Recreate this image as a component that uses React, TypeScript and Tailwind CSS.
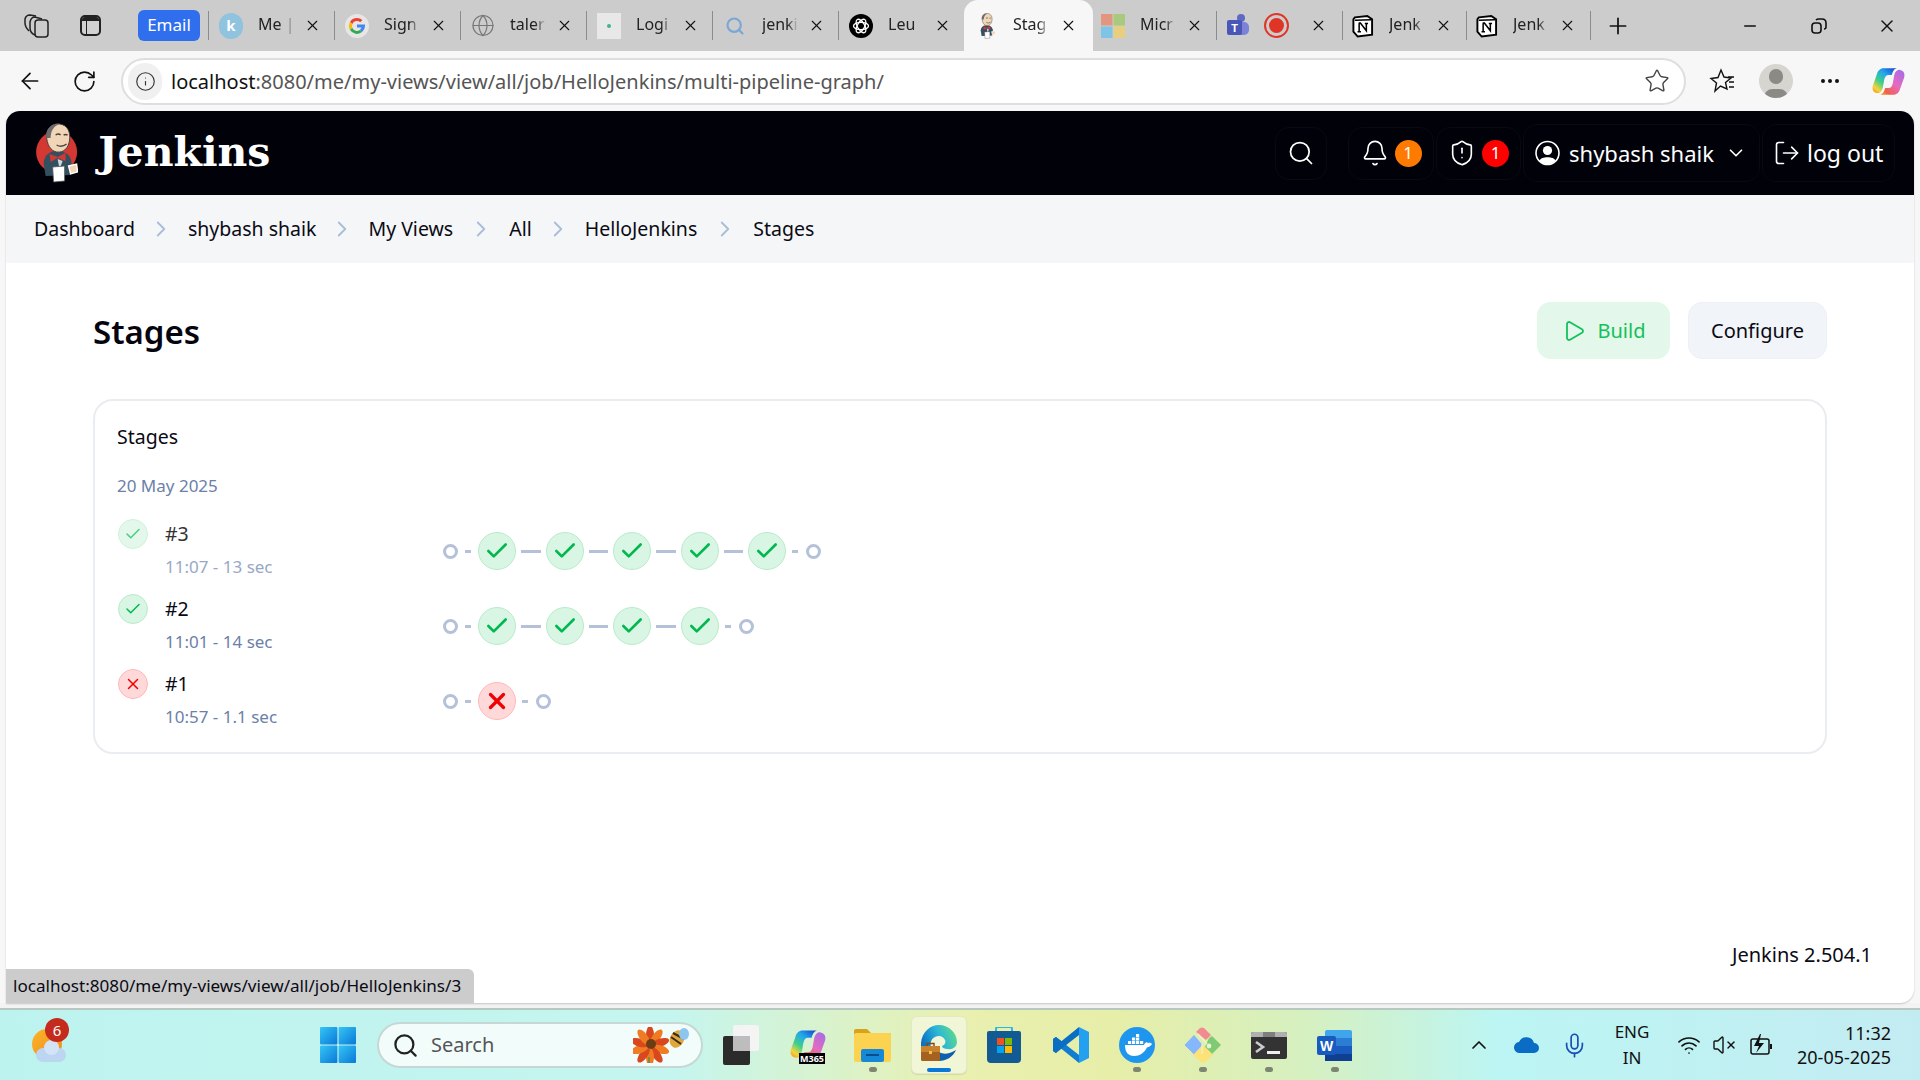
import React from "react";
import { Search, Bell, ShieldAlert, ChevronDown, LogOut, Play, Check, X, ChevronRight, ArrowLeft, RotateCw, Info, Star, Plus, Minus, Globe, MoreHorizontal, Mic, ChevronUp, Wifi, VolumeX } from "lucide-react";

const JenkinsLogo = ({ size = 60, red = true }: { size?: number; red?: boolean }) => (
  <svg width={size * 0.72} height={size} viewBox="0 0 42 60">
    {red && <ellipse cx="21" cy="29" rx="20.5" ry="21" fill="#d33833" />}
    <path d="M8 40 C9 31 15 28 21 28 C29 28 35 31 36 40 L35 52 L10 53 Z" fill="#335061" />
    <path d="M11 13 C11 4 18 0 24 1 C32 2 35 9 34 17 C33 25 28 30 21 29 C15 28 11 21 11 13 Z" fill="#f0d6b7" stroke="#49423d" strokeWidth="1" />
    <path d="M11 15 C9 7 16 0 24 1 C18 3 15 8 15 15 Z" fill="#6d6b6d" />
    <path d="M20 12 q3-2 5 0 M28 12 q2-1 4 0 M21 22 q5 3 10-1" stroke="#49423d" strokeWidth="1.4" fill="none" />
    <path d="M14 31 L22 34 L30 30 L30 38 L22 35 L15 39 Z" fill="#d33833" />
    <path d="M22 36 L27 38 L24 46 Z" fill="#cfd8dc" />
    <path d="M17 44 L29 43 L29 58 L18 59 Z" fill="#fff" stroke="#555" strokeWidth="0.8" />
    <path d="M33 43 L41 41 L42 49 L35 51 Z" fill="#f0d6b7" stroke="#fff" strokeWidth="1.4" />
  </svg>
);

const NotionIcon = () => (
  <svg width="23" height="24" viewBox="0 0 24 24">
    <path d="M4 3 L17 1.5 L22 5 V21 L7 23 L2.5 18 V5 Z" fill="#fff" stroke="#000" strokeWidth="2" />
    <path d="M4 6 L21 5.5" stroke="#000" strokeWidth="1.5" />
    <path d="M8 9 L9.8 9 L16 17 V9.5 M8.5 9 V18 M6.8 18 H10.4 M14.4 9.3 H17.8" stroke="#000" strokeWidth="1.6" fill="none" />
  </svg>
);

const GoogleIcon = () => (
  <svg width="24" height="24" viewBox="0 0 24 24">
    <circle cx="12" cy="12" r="12" fill="#e6e6e6" />
    <path d="M12 4 a8 8 0 0 1 5.4 2.1 l-2.2 2.2 a4.8 4.8 0 0 0-7.8 1.8 L4.9 8.2 A8 8 0 0 1 12 4z" fill="#ea4335" />
    <path d="M4.9 8.2 l2.5 1.9 a5 5 0 0 0 0 3.8 l-2.5 1.9 a8 8 0 0 1 0-7.6z" fill="#fbbc05" />
    <path d="M4.9 15.8 l2.5-1.9 a4.8 4.8 0 0 0 7.4 2 l2.5 1.9 A8 8 0 0 1 4.9 15.8z" fill="#34a853" />
    <path d="M20 10.5 v1.5 a8 8 0 0 1-2.7 5.8 l-2.5-1.9 a4 4 0 0 0 1.7-2.4 H12 v-3z" fill="#4285f4" />
  </svg>
);

const OpenAIIcon = () => (
  <svg width="24" height="24" viewBox="0 0 24 24">
    <circle cx="12" cy="12" r="12" fill="#000" />
    <g fill="none" stroke="#fff" strokeWidth="1.3">
      <ellipse cx="12" cy="12" rx="7.5" ry="3.6" />
      <ellipse cx="12" cy="12" rx="7.5" ry="3.6" transform="rotate(60 12 12)" />
      <ellipse cx="12" cy="12" rx="7.5" ry="3.6" transform="rotate(120 12 12)" />
    </g>
  </svg>
);

const TileMS = () => (
  <svg width="24" height="24" viewBox="0 0 24 24">
    <rect x="0" y="0" width="11.5" height="11.5" fill="#e2957f" />
    <rect x="12.5" y="0" width="11.5" height="11.5" fill="#a9c97c" />
    <rect x="0" y="12.5" width="11.5" height="11.5" fill="#7fc4e6" />
    <rect x="12.5" y="12.5" width="11.5" height="11.5" fill="#e8cf80" />
  </svg>
);

const tabIcons: Record<string, React.ReactNode> = {
  k: <div className="flex h-[26px] w-[24px] items-center justify-center rounded-full bg-[#8fc3de] text-[15px] font-bold text-white">k</div>,
  g: <GoogleIcon />,
  globe: <Globe size={25} strokeWidth={1.2} color="#777" />,
  login: (
    <div className="flex h-[26px] w-[24px] items-center justify-center bg-[#e8e8e8]">
      <div className="h-[4px] w-[4px] rounded-full bg-[#3fb58b]" />
    </div>
  ),
  search: <Search size={20} strokeWidth={2.6} color="#7ba7d4" />,
  openai: <OpenAIIcon />,
  jenkins: <JenkinsLogo size={26} red={false} />,
  notion: <NotionIcon />,
};

const titleCls = "-mt-[3px] w-[36px] overflow-hidden text-[16px] whitespace-nowrap text-[#222] [mask-image:linear-gradient(90deg,#000_70%,transparent)]";

const Tab = ({ icon, title, active, narrow }: { icon: string; title: string; active?: boolean; narrow?: boolean }) => (
  <div
    className={
      active
        ? "flex h-[51px] w-[129px] shrink-0 items-center rounded-t-[14px] bg-[#f7f7f7] pl-[10px]"
        : narrow
          ? "flex h-[29px] w-[124px] shrink-0 items-center border-l border-[#8c8c8c] pl-[7px]"
          : "flex h-[29px] w-[126px] shrink-0 items-center border-l border-[#8c8c8c] pl-[10px]"
    }
  >
    <div className="flex w-[24px] shrink-0 items-center justify-center">{tabIcons[icon]}</div>
    <div className={"ml-[15px] " + titleCls}>{title}</div>
    <X size={17} strokeWidth={1.6} color="#111" className={active ? "ml-[11px] shrink-0" : "ml-[10px] shrink-0"} />
  </div>
);

const Edge = () => (
  <svg width="36" height="36" viewBox="0 0 36 36">
    <defs>
      <linearGradient id="eg" x1="0" y1="0.6" x2="1" y2="0.3">
        <stop offset="0" stopColor="#0c6fc4" />
        <stop offset="0.5" stopColor="#2bb6d8" />
        <stop offset="1" stopColor="#5fdc8a" />
      </linearGradient>
    </defs>
    <path d="M0 18 C1 7 9 0 18 0 C28 0 36 8 36 17 C36 22 31 25 27 24 C24 24 21 23 21 21 C24 20 25 17 24 15 C22 11 18 10 14 12 C10 14 9 18 10 22 L0 24 Z" fill="url(#eg)" />
    <path d="M14 24 C19 30 27 30 35 25 C32 32 25 36 18 36 L14 36 Z" fill="#0e5fae" />
    <rect x="0" y="21" width="19" height="15" rx="1.5" fill="#a5611f" />
    <rect x="0" y="21" width="19" height="6" fill="#c9822e" />
    <rect x="8" y="26" width="3" height="3" fill="#f3c14d" />
    <path d="M6 21 v-2.5 h7 v2.5" fill="none" stroke="#7d4716" strokeWidth="1.4" />
  </svg>
);

const Copilot = ({ size = 33, id }: { size?: number; id: string }) => (
  <svg width={size} height={size} viewBox="0 0 40 40">
    <defs>
      <linearGradient id={id + "a"} x1="0.85" y1="0" x2="0.1" y2="1">
        <stop offset="0" stopColor="#1b4fd0" />
        <stop offset="0.3" stopColor="#22a6ee" />
        <stop offset="0.6" stopColor="#3fcf8a" />
        <stop offset="0.85" stopColor="#f5d53a" />
        <stop offset="1" stopColor="#f59a2a" />
      </linearGradient>
      <linearGradient id={id + "b"} x1="0.9" y1="0" x2="0.1" y2="1">
        <stop offset="0" stopColor="#a86be8" />
        <stop offset="0.5" stopColor="#e56bc0" />
        <stop offset="0.85" stopColor="#f0604a" />
        <stop offset="1" stopColor="#f5902a" />
      </linearGradient>
    </defs>
    <path d="M14 4 H30 C26 5 25 9 24 12 H20 C17 12 16 14 15 17 L13 28 C12 32 9 35 6 34 C1 33 0 29 1 25 L6 11 C7 7 10 4 14 4 Z" fill={`url(#${id}a)`} />
    <path d="M26 36 H10 C14 35 15 31 16 28 H20 C23 28 24 26 25 23 L27 12 C28 8 31 5 34 6 C39 7 40 11 39 15 L34 29 C33 33 30 36 26 36 Z" fill={`url(#${id}b)`} />
  </svg>
);

const WinLogo = () => (
  <svg width="36" height="36" viewBox="0 0 36 36">
    <defs>
      <linearGradient id="w" x1="0" y1="0" x2="1" y2="1">
        <stop offset="0" stopColor="#35c5f5" />
        <stop offset="1" stopColor="#0a78d8" />
      </linearGradient>
    </defs>
    <rect x="0" y="0" width="17.4" height="17.4" fill="url(#w)" rx="1" />
    <rect x="18.6" y="0" width="17.4" height="17.4" fill="url(#w)" rx="1" />
    <rect x="0" y="18.6" width="17.4" height="17.4" fill="url(#w)" rx="1" />
    <rect x="18.6" y="18.6" width="17.4" height="17.4" fill="url(#w)" rx="1" />
  </svg>
);

const Bees = () => (
  <svg width="56" height="36" viewBox="0 0 56 36">
    <g>
      {[0, 36, 72, 108, 144, 180, 216, 252, 288, 324].map((a) => (
        <ellipse key={a} cx="17" cy="8" rx="4" ry="9" fill={a % 72 === 0 ? "#d9471e" : "#ef7b22"} transform={`rotate(${a} 17 19)`} />
      ))}
      <circle cx="18" cy="17" r="5" fill="#6b3d14" />
      <path d="M16 30 v6" stroke="#5f8f3a" strokeWidth="1.5" />
    </g>
    <ellipse cx="44" cy="12" rx="7" ry="9" fill="#e0a63a" transform="rotate(25 44 12)" />
    <path d="M38 10 L48 17 M40 6 L51 12" stroke="#3a2a18" strokeWidth="2" />
    <ellipse cx="51" cy="7" rx="5" ry="6" fill="#8cc6ee" />
  </svg>
);

const TaskView = () => (
  <svg width="36" height="40" viewBox="0 0 36 40">
    <rect x="10" y="0" width="26" height="26" rx="2" fill="#f4f4f4" />
    <rect x="0" y="11" width="27" height="29" rx="2" fill="#2b2b2b" />
    <rect x="10" y="11" width="17" height="15" fill="#bdbdbd" />
  </svg>
);

const M365 = () => (
  <div className="relative h-[36px] w-[36px]">
    <Copilot size={36} id="m" />
    <div className="absolute -bottom-[1px] left-[9px] bg-black px-[1px] text-[9px] leading-[11px] font-bold text-white">M365</div>
  </div>
);

const Files = () => (
  <svg width="37" height="33" viewBox="0 0 37 33">
    <path d="M0 2 a2 2 0 0 1 2-2 h11 l4 4 h18 a2 2 0 0 1 2 2 v4 H0 Z" fill="#d9a21b" />
    <rect x="0" y="4" width="37" height="29" rx="2" fill="#fcd351" />
    <rect x="7" y="20" width="23" height="13" rx="2" fill="#1688d8" />
    <rect x="12" y="25" width="13" height="2" fill="#084f8a" />
  </svg>
);

const Store = () => (
  <svg width="34" height="36" viewBox="0 0 34 36">
    <path d="M9 5 V2 a2 2 0 0 1 2-2 h12 a2 2 0 0 1 2 2 v3" fill="none" stroke="#2bb6e8" strokeWidth="2" />
    <path d="M0 6 a2 2 0 0 1 2-2 h30 a2 2 0 0 1 2 2 v26 a4 4 0 0 1-4 4 H4 a4 4 0 0 1-4-4 Z" fill="#125a93" />
    <rect x="10" y="11" width="7" height="7" fill="#f25022" />
    <rect x="18" y="11" width="7" height="7" fill="#7fba00" />
    <rect x="10" y="19" width="7" height="7" fill="#00a4ef" />
    <rect x="18" y="19" width="7" height="7" fill="#ffb900" />
  </svg>
);

const VSCode = () => (
  <svg width="36" height="36" viewBox="0 0 36 36">
    <path d="M0 12 L3 10 L26 28 V36 L0 15 Z" fill="#0f7ed0" />
    <path d="M0 24 L3 26 L26 8 V0 L0 21 Z" fill="#0a6fc2" />
    <path d="M0 12 L3 10 L11 16 L7 20 L3 26 L0 24 Z" fill="#0a6fc2" />
    <path d="M26 0 L36 5 V31 L26 36 Z" fill="#23a0f0" />
  </svg>
);

const Docker = () => (
  <svg width="36" height="36" viewBox="0 0 36 36">
    <circle cx="18" cy="18" r="18" fill="#1f96ee" />
    <path d="M6 18 H25 C26 15 28 14.5 29 16 C31 15.5 32 16 33 17 C31 20 29 20 28 20.5 C25 26 21 29 15 29 C9 29 6 25 6 18 Z" fill="#fff" />
    <g fill="#fff">
      <rect x="9" y="14" width="3.2" height="3" />
      <rect x="13" y="14" width="3.2" height="3" />
      <rect x="17" y="14" width="3.2" height="3" />
      <rect x="21" y="14" width="3.2" height="3" />
      <rect x="13" y="10.5" width="3.2" height="3" />
      <rect x="17" y="10.5" width="3.2" height="3" />
      <rect x="17" y="7" width="3.2" height="3" />
    </g>
  </svg>
);

const GitIcon = () => (
  <svg width="36" height="36" viewBox="0 0 36 36">
    <path d="M0 18 L9 8.5 L17 18 L9 27 Z" fill="#86b6fc" stroke="#86b6fc" strokeLinejoin="round" />
    <path d="M11 5 L15 1 Q17 0 19 1 L26 8 L21 13 Z" fill="#f28b90" />
    <path d="M24 11 L27 9 L36 18 L27 27 L20 20 Z" fill="#7fca72" />
    <path d="M8 28 L17 19 L19 19 L28 28 L19 36 Q18 36 17 36 Z" fill="#fde27a" />
    <circle cx="24" cy="19" r="2.4" fill="#e8f3d0" />
    <path d="M13 7 L22 17 M17 17 L17 27" stroke="#eef2c8" strokeWidth="1.3" />
  </svg>
);

const Terminal = () => (
  <svg width="36" height="27" viewBox="0 0 36 27">
    <rect width="36" height="27" rx="2" fill="#333" />
    <path d="M2 0 H34 a2 2 0 0 1 2 2 V5 H0 V2 a2 2 0 0 1 2-2 Z" fill="#b0b0b0" />
    <rect x="12" width="12" height="5" fill="#7f7f7f" />
    <path d="M5 10 L12 15 L5 20" fill="none" stroke="#ccc" strokeWidth="2.6" />
    <rect x="16" y="19" width="13" height="3" fill="#eee" />
  </svg>
);

const Word = () => (
  <svg width="35" height="31" viewBox="0 0 35 31">
    <rect x="8" y="0" width="27" height="31" rx="2" fill="#41a5ee" />
    <rect x="8" y="8" width="27" height="8" fill="#2b7cd3" />
    <rect x="8" y="16" width="27" height="8" fill="#185abd" />
    <rect x="8" y="24" width="27" height="7" fill="#103f91" />
    <rect x="0" y="6" width="19" height="19" rx="2" fill="#185abd" />
    <text x="9.5" y="21" textAnchor="middle" fontSize="14" fontWeight="700" fill="#fff" fontFamily="Liberation Sans">W</text>
  </svg>
);

const Weather = () => (
  <div className="relative -mt-[10px] h-[44px] w-[36px]">
    <div className="absolute top-[11px] left-0 h-[30px] w-[30px] rounded-full bg-[linear-gradient(135deg,#fbb52a,#f08a1d)]" />
    <div className="absolute bottom-0 left-[4px] h-[14px] w-[30px] rounded-[8px] bg-[#bcd6f2]" />
    <div className="absolute bottom-[7px] left-[12px] h-[15px] w-[15px] rounded-full bg-[#d3e4f8]" />
    <div className="absolute top-0 left-[13px] flex h-[24px] w-[24px] items-center justify-center rounded-full bg-[#c42b1c] text-[15px] text-white">6</div>
  </div>
);

const StageDot = () => <div className="h-[15px] w-[15px] shrink-0 rounded-full border-[3px] border-[#b4c1d9]" />;
const LeadDash = () => <div className="mx-[7px] h-[3px] w-[6px] shrink-0 bg-[#b4c1d9]" />;
const TailDash = () => <div className="mr-[8px] ml-[6px] h-[3px] w-[6px] shrink-0 bg-[#b4c1d9]" />;
const LongDash = () => <div className="mx-[5px] h-[3px] w-[19.5px] shrink-0 bg-[#b4c1d9]" />;
const StageOk = () => (
  <div className="flex h-[38px] w-[38px] shrink-0 items-center justify-center rounded-full border border-[#b8ecca] bg-[#d9f5e3]">
    <Check size={26} strokeWidth={2.4} color="#00b84f" />
  </div>
);
const StageFail = () => (
  <div className="flex h-[38px] w-[38px] shrink-0 items-center justify-center rounded-full border border-[#ffb8b8] bg-[#ffd9d9]">
    <X size={26} strokeWidth={3} color="#f00000" />
  </div>
);

const Row = ({ id, sub, ok, n, faded }: { id: string; sub: string; ok: boolean; n: number; faded?: boolean }) => (
  <div className="flex h-[75px]">
    <div className="flex w-[326px] shrink-0 pl-[1px]">
      <div
        className={
          (ok ? "border-[#b8ecca] bg-[#d9f5e3] " : "border-[#ffb8b8] bg-[#ffd9d9] ") +
          (faded ? "opacity-70 " : "") +
          "flex h-[30px] w-[30px] shrink-0 items-center justify-center rounded-full border"
        }
      >
        {ok ? <Check size={18} strokeWidth={2} color="#00b84f" /> : <X size={18} strokeWidth={2} color="#f00000" />}
      </div>
      <div className="ml-[17px]">
        <div className={(faded ? "text-[#333] " : "text-[#0a0a14] ") + "h-[30px] text-[19.5px] leading-[30px]"}>{id}</div>
        <div className={(faded ? "text-[#98a8c6] " : "text-[#6c80a8] ") + "mt-[6px] text-[17px] leading-[24px] whitespace-nowrap"}>{sub}</div>
      </div>
    </div>
    <div className="flex h-[64px] items-center">
      <StageDot />
      <LeadDash />
      {ok ? (
        Array.from({ length: n }).map((_, i) => (
          <React.Fragment key={i}>
            {i > 0 && <LongDash />}
            <StageOk />
          </React.Fragment>
        ))
      ) : (
        <StageFail />
      )}
      <TailDash />
      <StageDot />
    </div>
  </div>
);

const Crumbs = [
  { t: "Dashboard", gap: "" },
  { t: "shybash shaik", gap: "w-[53px]" },
  { t: "My Views", gap: "w-[52px]" },
  { t: "All", gap: "w-[56px]" },
  { t: "HelloJenkins", gap: "w-[53px]" },
  { t: "Stages", gap: "w-[56px]" },
];

const TaskIcon = ({ ml, children, dot }: { ml: string; children: React.ReactNode; dot?: boolean }) => (
  <div className={ml + " relative flex h-[70px] shrink-0 items-center"}>
    {children}
    {dot && <div className="absolute bottom-[8px] left-1/2 h-[5px] w-[8px] -translate-x-1/2 rounded-full bg-[#7d8670]" />}
  </div>
);

export default function App() {
  return (
    <div className="flex h-[1080px] w-[1920px] flex-col overflow-hidden bg-[#f7f7f7] font-['Noto_Sans',sans-serif]">
      {/* tab strip */}
      <div className="flex h-[51px] shrink-0 items-center bg-[#cccccc]">
        <svg width="25" height="24" viewBox="0 0 25 24" className="ml-[24px]" fill="none" stroke="#222" strokeWidth="1.5">
          <rect x="11" y="6" width="13" height="17" rx="3" />
          <path d="M11 21 Q6 19 6 14 V8 Q7 3 11 3 L18 5" />
          <path d="M5 17 Q1 13 1 9 V5 Q2 1 6 1 L12 2" />
        </svg>
        <div className="ml-[31px] flex h-[21px] w-[21px] flex-col overflow-hidden rounded-[5px] border-2 border-[#222] bg-[#d2d2d2]">
          <div className="h-[4px] shrink-0 bg-[#222]" />
          <div className="ml-[4px] flex-1 border-l-[1.5px] border-[#222]" />
        </div>
        <div className="ml-[37px] flex h-[31px] w-[62px] items-center justify-center rounded-[6px] bg-[#2f6fed] pb-[2px] text-[17px] text-white">Email</div>
        <div className="ml-[8px] flex items-center">
          <Tab icon="k" title="Me |" />
          <Tab icon="g" title="Sign" />
          <Tab icon="globe" title="taler" />
          <Tab icon="login" title="Logi" />
          <Tab icon="search" title="jenki" />
          <Tab icon="openai" title="Leu" />
          <Tab icon="jenkins" title="Stag" active />
          <div className="flex h-[29px] w-[123px] shrink-0 items-center pl-[8px]">
            <TileMS />
            <div className={"ml-[15px] " + titleCls}>Micr</div>
            <X size={17} strokeWidth={1.6} color="#111" className="ml-[10px] shrink-0" />
          </div>
          <div className="flex h-[29px] w-[126px] shrink-0 items-center border-l border-[#8c8c8c] pl-[9px]">
            <svg width="24" height="26" viewBox="0 0 24 26">
              <circle cx="15" cy="5" r="4" fill="#5d6ac4" />
              <rect x="10" y="9" width="13" height="13" rx="5" fill="#7b83d9" />
              <rect x="1" y="7" width="15" height="15" rx="2" fill="#4a56b8" />
              <text x="8.5" y="19" textAnchor="middle" fontSize="11" fontWeight="700" fill="#fff" fontFamily="Liberation Sans">T</text>
            </svg>
            <div className="ml-[14px] flex h-[25px] w-[25px] items-center justify-center rounded-full border-2 border-[#e03426]">
              <div className="h-[15px] w-[15px] rounded-full bg-[#e03426]" />
            </div>
            <X size={17} strokeWidth={1.6} color="#111" className="ml-[21px] shrink-0" />
          </div>
          <Tab icon="notion" title="Jenk" narrow />
          <Tab icon="notion" title="Jenk" narrow />
          <div className="h-[29px] border-l border-[#8c8c8c]" />
        </div>
        <Plus size={26} strokeWidth={1.6} color="#111" className="ml-[14px]" />
        <Minus size={18} strokeWidth={2} color="#111" className="ml-[110px]" />
        <svg width="16" height="16" viewBox="0 0 16 16" className="ml-[52px]" fill="none" stroke="#111" strokeWidth="1.6">
          <rect x="1" y="5" width="9" height="10" rx="3" />
          <path d="M5 2 Q6 1 8 1 h3 q4 0 4 4 v4 q0 2-2 2" />
        </svg>
        <X size={20} strokeWidth={1.7} color="#111" className="ml-[50px]" />
      </div>

      {/* address row */}
      <div className="flex h-[60px] shrink-0 items-center bg-[#f7f7f7]">
        <ArrowLeft size={26} strokeWidth={1.6} color="#111" className="ml-[17px]" />
        <RotateCw size={25} strokeWidth={1.6} color="#111" className="ml-[29px]" />
        <div className="ml-[24px] flex h-[47px] w-[1565px] shrink-0 items-center rounded-full border-2 border-[#dedede] bg-white pl-[5px]">
          <div className="flex h-[37px] w-[34px] items-center justify-center rounded-full bg-[#f0f0f0]">
            <Info size={21} strokeWidth={1.3} color="#333" />
          </div>
          <div className="mt-[1px] ml-[9px] text-[20px] whitespace-nowrap text-[#555]">
            <span className="text-[#111]">localhost</span>:8080/me/my-views/view/all/job/HelloJenkins/multi-pipeline-graph/
          </div>
          <Star size={26} strokeWidth={1.3} color="#444" className="mr-[14px] ml-auto" />
        </div>
        <svg width="26" height="26" viewBox="0 0 26 26" className="ml-[23px]" fill="none" stroke="#111" strokeWidth="1.4">
          <path d="M12 2 L15 9 L22 10 L16.5 14.5 L18 21 L11.5 18 L6 23 L7.5 15 L2 10.5 L9 9.5 Z" />
          <path d="M19 9 h6 M20 14 h5 M20 19 h5" />
        </svg>
        <div className="relative ml-[24px] h-[34px] w-[34px] overflow-hidden rounded-full bg-[#d6d5d0]">
          <div className="absolute top-[5px] left-[10px] h-[15px] w-[14px] rounded-full bg-[#8c8a85]" />
          <div className="absolute -bottom-[8px] left-[5px] h-[17px] w-[24px] rounded-full bg-[#8c8a85]" />
        </div>
        <MoreHorizontal size={24} strokeWidth={2} color="#111" className="ml-[25px]" />
        <div className="ml-[30px]">
          <Copilot size={33} id="c" />
        </div>
      </div>

      {/* page */}
      <div className="flex h-[892px] shrink-0 flex-col px-[6px]">
        <div className="relative flex h-full flex-col overflow-hidden rounded-t-[14px] rounded-br-[14px] bg-white shadow-[0_1px_2px_#00000030]">
          <header className="flex h-[84px] shrink-0 items-center bg-[#01010a] pl-[29px] text-white">
            <JenkinsLogo size={60} />
            <div className="ml-[20px] font-['DejaVu_Serif',serif] text-[41px] font-bold">Jenkins</div>
            <div className="mr-[19px] ml-auto flex items-center gap-[2px]">
              <div className="mr-[19px] flex h-[53px] w-[52px] items-center justify-center rounded-[14px] border border-[#090912]">
                <Search size={28} strokeWidth={1.5} />
              </div>
              <div className="flex h-[53px] w-[86px] items-center justify-center gap-[6px] rounded-[14px] border border-[#090912]">
                <Bell size={28} strokeWidth={1.4} />
                <div className="flex h-[27px] w-[27px] items-center justify-center rounded-full bg-[#ff7a00] text-[17px]">1</div>
              </div>
              <div className="flex h-[53px] w-[85px] items-center justify-center gap-[6px] rounded-[14px] border border-[#090912]">
                <ShieldAlert size={28} strokeWidth={1.4} />
                <div className="flex h-[27px] w-[27px] items-center justify-center rounded-full bg-[#ff0000] text-[17px]">1</div>
              </div>
              <div className="flex h-[58px] w-[237px] items-center rounded-[14px] border border-[#090912] pl-[11px]">
                <svg width="25" height="28" viewBox="0 0 25 25" fill="none">
                  <circle cx="12.5" cy="12.5" r="11.5" stroke="#fff" strokeWidth="1.6" />
                  <circle cx="12.5" cy="10" r="4.6" fill="#fff" />
                  <path d="M4.5 20 C6 15.5 19 15.5 20.5 20 C16 25 9 25 4.5 20 Z" fill="#fff" />
                </svg>
                <span className="mt-[1px] ml-[9px] text-[22px] whitespace-nowrap">shybash shaik</span>
                <ChevronDown size={22} strokeWidth={1.8} className="ml-[11px]" />
              </div>
              <div className="flex h-[58px] w-[133px] items-center rounded-[14px] border border-[#090912] pl-[10px]">
                <LogOut size={28} strokeWidth={1.4} />
                <span className="mt-[1px] ml-[6px] text-[23px] whitespace-nowrap">log out</span>
              </div>
            </div>
          </header>

          <nav className="flex h-[68px] shrink-0 items-center bg-[#f5f6f8] pl-[28px] text-[19.5px] text-[#0a0a14]">
            {Crumbs.map((c) => (
              <React.Fragment key={c.t}>
                {c.gap && (
                  <div className={c.gap + " flex justify-center"}>
                    <ChevronRight size={26} strokeWidth={1.7} color="#a9bdd9" />
                  </div>
                )}
                <span>{c.t}</span>
              </React.Fragment>
            ))}
          </nav>

          <main className="flex flex-1 flex-col px-[87px]">
            <div className="flex h-[136px] shrink-0 items-start pt-[39px]">
              <h1 className="mt-[8px] text-[33px] leading-[44px] font-semibold text-[#050510]">Stages</h1>
              <div className="ml-auto flex gap-[18px]">
                <div className="flex h-[57px] w-[133px] items-center justify-center gap-[12px] rounded-[14px] bg-[#e3f7ea] pt-[1px] text-[20px] text-[#13c15b]">
                  <Play size={24} strokeWidth={1.8} />
                  Build
                </div>
                <div className="flex h-[57px] w-[139px] items-center justify-center rounded-[14px] border border-[#edf0f4] bg-[#f1f4f8] pt-[1px] text-[20px] text-[#0a0a14]">
                  Configure
                </div>
              </div>
            </div>
            <section className="h-[355px] shrink-0 rounded-[20px] border-2 border-[#e9edf2] pr-[21px] pl-[22px]">
              <div className="mt-[21px] h-[30px] text-[19.5px] leading-[30px] text-[#0a0a14]">Stages</div>
              <div className="mt-[19px] h-[30px] text-[17px] leading-[30px] text-[#6c80a8]">20 May 2025</div>
              <div className="mt-[18px]">
                <Row id="#3" sub="11:07 - 13 sec" ok n={5} faded />
                <Row id="#2" sub="11:01 - 14 sec" ok n={4} />
                <Row id="#1" sub="10:57 - 1.1 sec" ok={false} n={1} />
              </div>
            </section>
            <div className="mt-auto mr-[-45px] mb-[33px] self-end text-[20px] text-[#0a0a14]">Jenkins 2.504.1</div>
          </main>

          <div className="absolute bottom-0 left-0 flex h-[34px] w-[468px] items-center rounded-tr-[6px] bg-[#cccccc] pl-[7px] text-[17.1px] whitespace-nowrap text-[#0a0a14]">
            localhost:8080/me/my-views/view/all/job/HelloJenkins/3
          </div>
        </div>
      </div>
      <div className="h-[5px] shrink-0 bg-[#f3f3f3]" />

      {/* taskbar */}
      <div className="flex h-[72px] shrink-0 items-center border-t-2 border-[#b6c8c0] bg-[linear-gradient(90deg,#bdf3ef_0%,#c5f5ef_35%,#e9f0b0_50%,#e6eea8_58%,#d6f0c0_68%,#bcf5f3_78%,#c3ecf2_100%)]">
        <TaskIcon ml="ml-[32px]">
          <Weather />
        </TaskIcon>
        <TaskIcon ml="ml-[252px]">
          <WinLogo />
        </TaskIcon>
        <div className="ml-[21px] flex h-[46px] w-[326px] items-center rounded-full border-2 border-[#c5d8d4] bg-[#f2fdfb] pl-[13px]">
          <Search size={27} strokeWidth={2} color="#222" />
          <span className="ml-[12px] text-[20px] text-[#555]">Search</span>
          <div className="mr-[12px] ml-auto">
            <Bees />
          </div>
        </div>
        <TaskIcon ml="ml-[20px]">
          <TaskView />
        </TaskIcon>
        <TaskIcon ml="ml-[31px]">
          <M365 />
        </TaskIcon>
        <TaskIcon ml="ml-[28px]" dot>
          <Files />
        </TaskIcon>
        <div className="relative ml-[20px] flex h-[58px] w-[56px] shrink-0 items-center justify-center rounded-[6px] border border-[#e3e8c8] bg-[#f1f6d6] shadow-[0_1px_1px_#00000018]">
          <div className="-mt-[4px]">
            <Edge />
          </div>
          <div className="absolute bottom-[1px] left-[15px] h-[4px] w-[24px] rounded-full bg-[#0a78d8]" />
        </div>
        <TaskIcon ml="ml-[20px]">
          <Store />
        </TaskIcon>
        <TaskIcon ml="ml-[32px]">
          <VSCode />
        </TaskIcon>
        <TaskIcon ml="ml-[30px]" dot>
          <Docker />
        </TaskIcon>
        <TaskIcon ml="ml-[30px]" dot>
          <GitIcon />
        </TaskIcon>
        <TaskIcon ml="ml-[30px]" dot>
          <Terminal />
        </TaskIcon>
        <TaskIcon ml="ml-[30px]" dot>
          <Word />
        </TaskIcon>
        <ChevronUp size={24} strokeWidth={1.7} color="#111" className="ml-[115px]" />
        <svg width="26" height="18" viewBox="0 0 26 18" className="ml-[23px]">
          <path d="M6 17 a5.5 5.5 0 0 1-1-11 a8 8 0 0 1 15 1 a5 5 0 0 1 0 10 Z" fill="#0a6cc4" />
        </svg>
        <Mic size={27} strokeWidth={1.5} color="#1a4fb5" className="ml-[21px]" />
        <div className="ml-[22px] flex w-[44px] flex-col items-center text-[17px] leading-[26px] text-[#111]">
          <span>ENG</span>
          <span>IN</span>
        </div>
        <Wifi size={24} strokeWidth={1.7} color="#111" className="ml-[23px]" />
        <VolumeX size={24} strokeWidth={1.4} color="#111" className="ml-[11px]" />
        <svg width="26" height="26" viewBox="0 0 26 26" className="ml-[12px]" fill="none" stroke="#111" strokeWidth="1.5">
          <rect x="3" y="7" width="18" height="15" rx="2" />
          <path d="M23 12 v5" strokeWidth="2" />
          <path d="M12 2 L6 14 H11 L8 21 L16 11 H11 L13 2 Z" fill="#111" stroke="none" />
        </svg>
        <div className="mr-[29px] ml-auto flex flex-col items-end text-[18px] leading-[24px] text-[#111]">
          <span>11:32</span>
          <span className="whitespace-nowrap">20-05-2025</span>
        </div>
      </div>
    </div>
  );
}
